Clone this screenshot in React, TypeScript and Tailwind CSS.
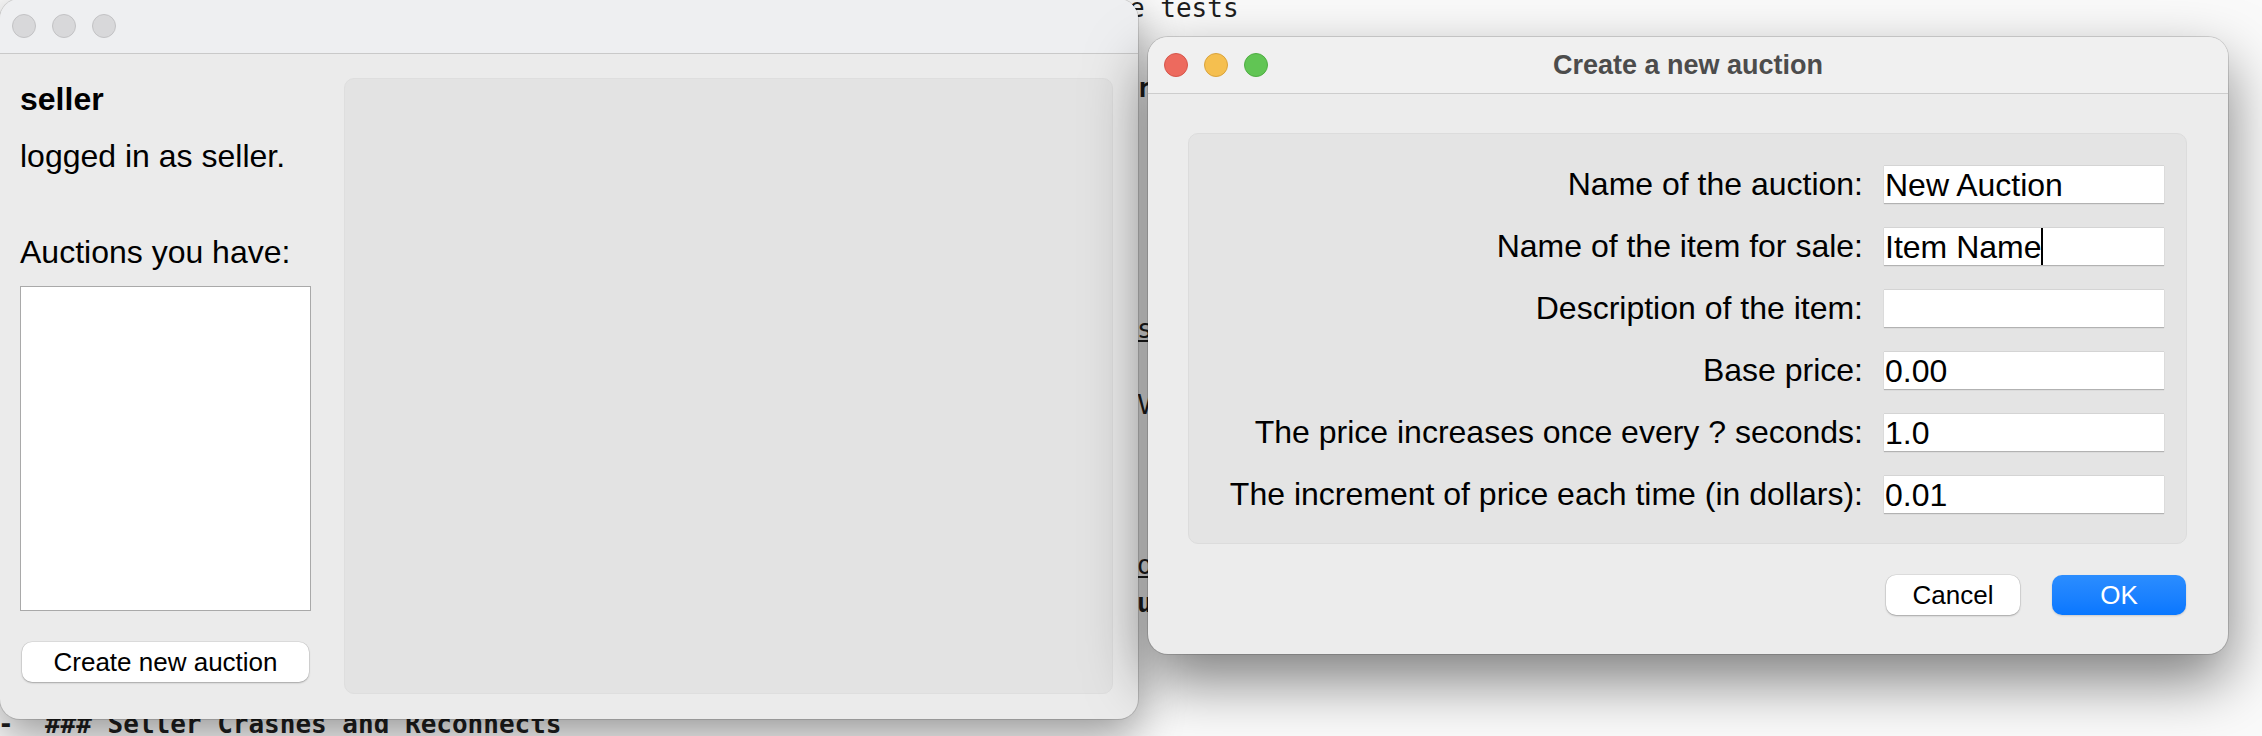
import React from "react";

const fields = [
  { label: "Name of the auction:", value: "New Auction" },
  { label: "Name of the item for sale:", value: "Item Name", caret: true },
  { label: "Description of the item:", value: "" },
  { label: "Base price:", value: "0.00" },
  { label: "The price increases once every ? seconds:", value: "1.0" },
  { label: "The increment of price each time (in dollars):", value: "0.01" },
];

// bits of the editor behind the two windows
function DesktopText() {
  const mono = "absolute font-['DejaVu_Sans_Mono',monospace] text-[26px] leading-none text-[#1e1e1e] whitespace-pre";
  return (
    <>
      <span className={`${mono} left-[1129px] top-[-5px]`}>e tests</span>
      <span className={`${mono} left-[1137px] top-[75px] font-bold`}>rs</span>
      <span className={`${mono} left-[1137px] top-[316px] underline`}>s</span>
      <span className={`${mono} left-[1137px] top-[392px]`}>V</span>
      <span className={`${mono} left-[1137px] top-[552px] underline`}>o</span>
      <span className={`${mono} left-[1137px] top-[590px] font-bold`}>u</span>
      <span className={`${mono} left-[-2px] top-[711px] text-[26.5px] font-bold`}>-  ### Seller Crashes and Reconnects</span>
    </>
  );
}

function Light({ color }: { color: string }) {
  return <span className={`block w-[24px] h-[24px] rounded-full border ${color}`} />;
}

function SellerWindow() {
  return (
    <div className="absolute left-0 top-[-1px] w-[1138px] h-[720px] rounded-[20px] overflow-hidden bg-[#ebebeb] flex flex-col shadow-[0_0_0_1px_rgba(0,0,0,0.12),0_16px_45px_rgba(0,0,0,0.4)]">
      <div className="h-[55px] shrink-0 bg-[#eeeff1] border-b border-[#c9c9c9] flex items-center pl-[12px] gap-[16px]">
        <Light color="bg-[#d8d8da] border-[#c2c2c4]" />
        <Light color="bg-[#d8d8da] border-[#c2c2c4]" />
        <Light color="bg-[#d8d8da] border-[#c2c2c4]" />
      </div>
      <div className="flex-1 flex pl-[20px] pr-[25px] pt-[24px] pb-[25px]">
        <div className="w-[291px] shrink-0 flex flex-col text-[32px] leading-[38px] text-black">
          <p className="mt-[2px] font-bold">seller</p>
          <p className="mt-[19px]">logged in as seller.</p>
          <p className="mt-[58px]">Auctions you have:</p>
          <div className="mt-[15px] h-[325px] bg-white border border-[#a9a9a9]" />
          <button className="mt-[31px] mx-[2px] h-[40px] rounded-[10px] bg-white text-[26px] leading-none text-black shadow-[0_0_0_0.5px_rgba(0,0,0,0.12),0_1px_2px_rgba(0,0,0,0.25)]">
            Create new auction
          </button>
        </div>
        <div className="flex-1 ml-[33px] rounded-[10px] bg-[#e3e3e3] border border-[#dedede]" />
      </div>
    </div>
  );
}

function AuctionDialog() {
  return (
    <div className="absolute left-[1148px] top-[37px] w-[1080px] h-[617px] rounded-[20px] overflow-hidden bg-[#ececec] flex flex-col shadow-[0_0_0_1px_rgba(0,0,0,0.14),0_26px_60px_rgba(0,0,0,0.5)]">
      <div className="h-[57px] shrink-0 bg-[#f0f0f0] border-b border-[#cdcdcd] grid grid-cols-[1fr_auto_1fr] items-center">
        <div className="flex items-center pl-[16px] gap-[16px]">
          <Light color="bg-[#ed6a5e] border-[#d5564b]" />
          <Light color="bg-[#f5bf4f] border-[#d9a33c]" />
          <Light color="bg-[#61c554] border-[#4fad43]" />
        </div>
        <h1 className="text-[27px] font-bold text-[#4c4c4c] leading-none">Create a new auction</h1>
        <div />
      </div>

      <div className="ml-[40px] mr-[41px] mt-[39px] rounded-[10px] bg-[#e4e4e4] border border-[#dcdcdc] pt-[31px] pb-[30px] pr-[22px] grid grid-cols-[1fr_280px] gap-x-[21px] gap-y-[24px] text-[32px] leading-[38px] text-black">
        {fields.map((f) => (
          <React.Fragment key={f.label}>
            <span className="text-right whitespace-nowrap">{f.label}</span>
            <div className="h-[38px] bg-white border-t border-[#d4d4d4] shadow-[0_1px_1px_rgba(0,0,0,0.22)] flex items-stretch pl-[1px]">
              <span className="leading-[38px] whitespace-nowrap">{f.value}</span>
              {f.caret && <span className="w-[2px] bg-black" />}
            </div>
          </React.Fragment>
        ))}
      </div>

      <div className="mt-[31px] mr-[42px] flex justify-end gap-[32px]">
        <button className="w-[134px] h-[40px] rounded-[10px] bg-white text-[26px] leading-none text-black shadow-[0_0_0_0.5px_rgba(0,0,0,0.12),0_1px_2px_rgba(0,0,0,0.25)]">
          Cancel
        </button>
        <button className="w-[134px] h-[40px] rounded-[10px] bg-linear-to-b from-[#2b8dff] to-[#0877ff] text-[26px] leading-none text-white shadow-[0_1px_2px_rgba(0,0,0,0.15)]">
          OK
        </button>
      </div>
    </div>
  );
}

export default function App() {
  return (
    <div className="relative w-[2262px] h-[736px] overflow-hidden bg-[#fafafa] font-['Liberation_Sans',Arial,sans-serif]">
      <DesktopText />
      <SellerWindow />
      <AuctionDialog />
    </div>
  );
}
